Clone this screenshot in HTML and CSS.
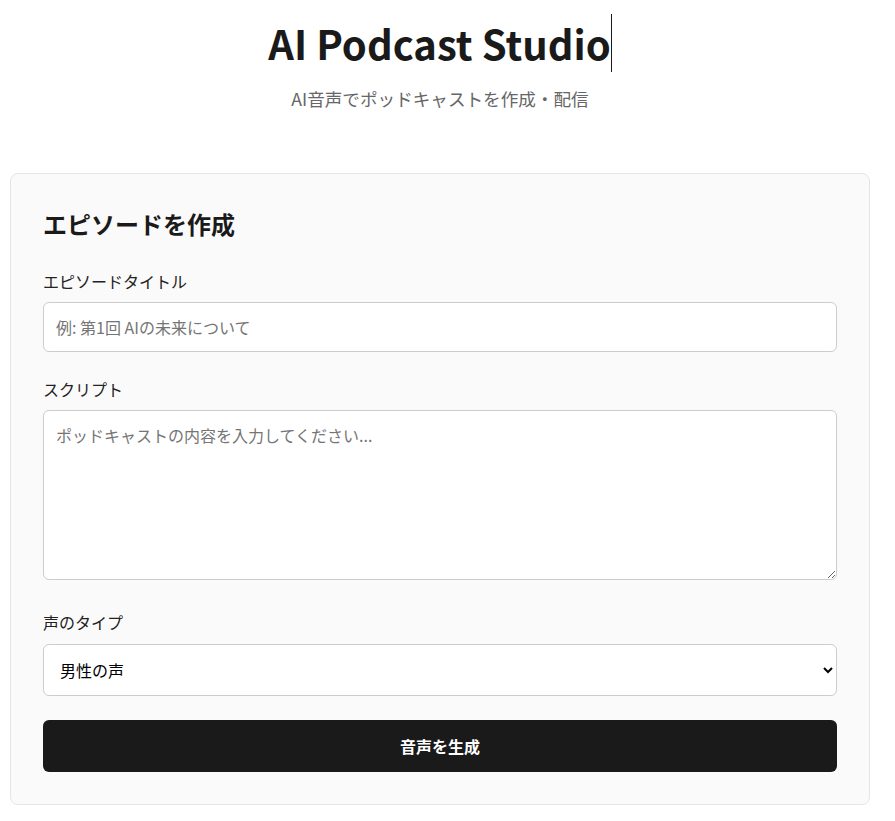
FILE: index.html
```html
<!DOCTYPE html>
<html lang="ja">
<head>
<meta charset="utf-8">
<title>AI Podcast Studio</title>
<link rel="stylesheet" href="styles.css">
</head>
<body>
<div class="page">
  <header class="header">
    <h1 class="title"><span class="typed">AI Podcast Studio</span></h1>
    <p class="subtitle">AI音声でポッドキャストを作成・配信</p>
  </header>
  <section class="card">
    <h2 class="card-title">エピソードを作成</h2>
    <div class="field">
      <label class="label" for="t">エピソードタイトル</label>
      <input class="input" id="t" type="text" placeholder="例: 第1回 AIの未来について">
    </div>
    <div class="field">
      <label class="label" for="s">スクリプト</label>
      <textarea class="input textarea" id="s" placeholder="ポッドキャストの内容を入力してください..."></textarea>
    </div>
    <div class="field field-last">
      <label class="label label-select" for="v">声のタイプ</label>
      <select class="input select" id="v">
        <option>男性の声</option>
        <option>女性の声</option>
      </select>
    </div>
    <button class="button" type="button">音声を生成</button>
  </section>
</div>
</body>
</html>
```

FILE: styles.css
```css
html, body {
  margin: 0;
  padding: 0;
  background: #ffffff;
}
body {
  font-family: "Noto Sans CJK JP", "Noto Sans", sans-serif;
  color: #1a1a1a;
}
.page {
  width: 880px;
  box-sizing: border-box;
  padding: 0 10px;
}
.header {
  text-align: center;
  padding-top: 14px;
  margin-bottom: 62px;
}
.title {
  margin: 0 0 14px;
  font-size: 40px;
  font-weight: 700;
  line-height: normal;
  color: #1a1a1a;
}
.typed {
  border-right: 1px solid #1a1a1a;
}
.subtitle {
  margin: 0;
  font-size: 17.6px;
  color: #666666;
}
.card {
  background: #fafafa;
  border: 1px solid #e5e5e5;
  border-radius: 8px;
  padding: 32px;
}
.card-title {
  margin: 0 0 28px;
  font-size: 24px;
  font-weight: 700;
  line-height: normal;
  color: #1a1a1a;
}
.field {
  margin-bottom: 25px;
}
.field-last {
  margin-bottom: 24px;
}
.label {
  display: block;
  margin-bottom: 9px;
  font-size: 16px;
  font-weight: 400;
  color: #222222;
}
.label-select {
  margin-bottom: 10px;
}
.input {
  width: 100%;
  box-sizing: border-box;
  padding: 12px;
  border: 1px solid #cccccc;
  border-radius: 6px;
  background: #ffffff;
  font-family: inherit;
  font-size: 16px;
  color: #1a1a1a;
}
.input::placeholder {
  color: #757575;
}
.textarea {
  height: 170px;
  resize: vertical;
}
.select {
  height: 52px;
  color: #000000;
}
.button {
  display: block;
  width: 100%;
  height: 52px;
  border: none;
  border-radius: 6px;
  background: #1a1a1a;
  color: #ffffff;
  font-family: inherit;
  font-size: 16px;
  font-weight: 700;
}
```
